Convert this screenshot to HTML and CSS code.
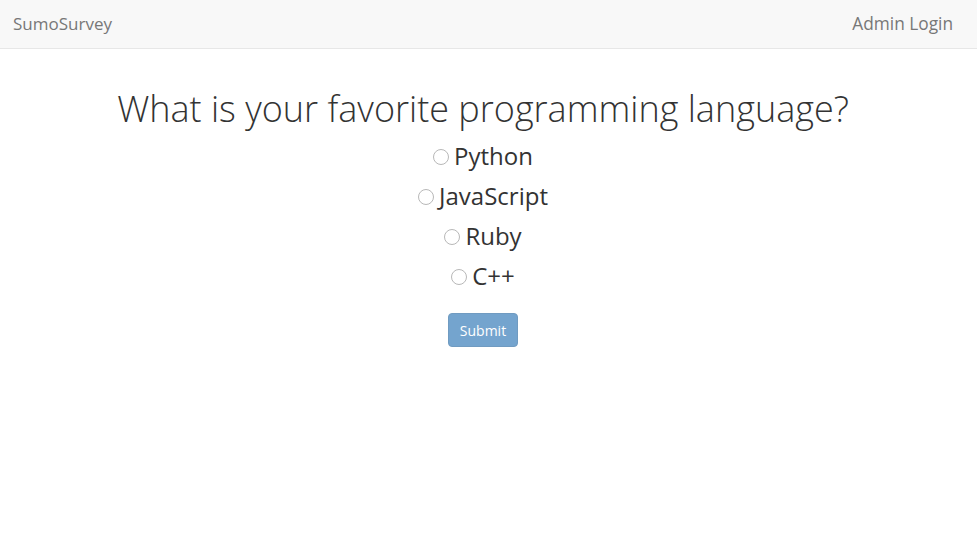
FILE: index.html
```html
<!DOCTYPE html>
<html>
<head>
<meta charset="utf-8">
<link rel="stylesheet" href="styles.css">
</head>
<body>
<nav class="navbar">
  <a class="brand" href="#">SumoSurvey</a>
  <a class="nav-link" href="#">Admin Login</a>
</nav>
<main class="survey">
  <h1 class="question">What is your favorite programming language?</h1>
  <form class="options">
    <label class="option"><input type="radio" name="lang" class="radio"><span>Python</span></label>
    <label class="option"><input type="radio" name="lang" class="radio"><span>JavaScript</span></label>
    <label class="option"><input type="radio" name="lang" class="radio"><span>Ruby</span></label>
    <label class="option"><input type="radio" name="lang" class="radio"><span>C++</span></label>
    <button type="button" class="submit">Submit</button>
  </form>
</main>
</body>
</html>
```
FILE: styles.css
```css
html, body {
  margin: 0;
  padding: 0;
  background: #fff;
  font-family: "Open Sans", "Liberation Sans", sans-serif;
  color: #333;
}
.navbar {
  height: 46px;
  background: #f8f8f8;
  border-bottom: 1px solid #e7e7e7;
  display: flex;
  align-items: center;
  justify-content: space-between;
  padding: 0 24px 2px 13px;
}
.brand, .nav-link {
  color: #777;
  text-decoration: none;
  font-size: 17px;
}
.nav-link {
  font-size: 17.3px;
}
.survey {
  display: flex;
  flex-direction: column;
  align-items: center;
  padding-right: 11px;
}
.question {
  font-weight: 300;
  font-size: 36px;
  margin: 37px 0 0;
  line-height: 46px;
  color: #333;
}
.options {
  display: flex;
  flex-direction: column;
  align-items: center;
  padding-top: 3px;
}
.option {
  display: flex;
  align-items: center;
  font-size: 24px;
  font-weight: 400;
  height: 40px;
  color: #333;
}
.radio {
  appearance: none;
  width: 16px;
  height: 16px;
  border: 1px solid #b8b8b8;
  border-radius: 50%;
  margin: 3px 5px 0 0;
  background: #fff;
}
.submit {
  margin-top: 18px;
  width: 70px;
  height: 34px;
  border: 1px solid #2e6da4;
  border-radius: 4px;
  background: #337ab7;
  opacity: 0.68;
  color: #fff;
  font-family: "Open Sans", "Liberation Sans", sans-serif;
  font-size: 14px;
  padding: 0;
}
```
